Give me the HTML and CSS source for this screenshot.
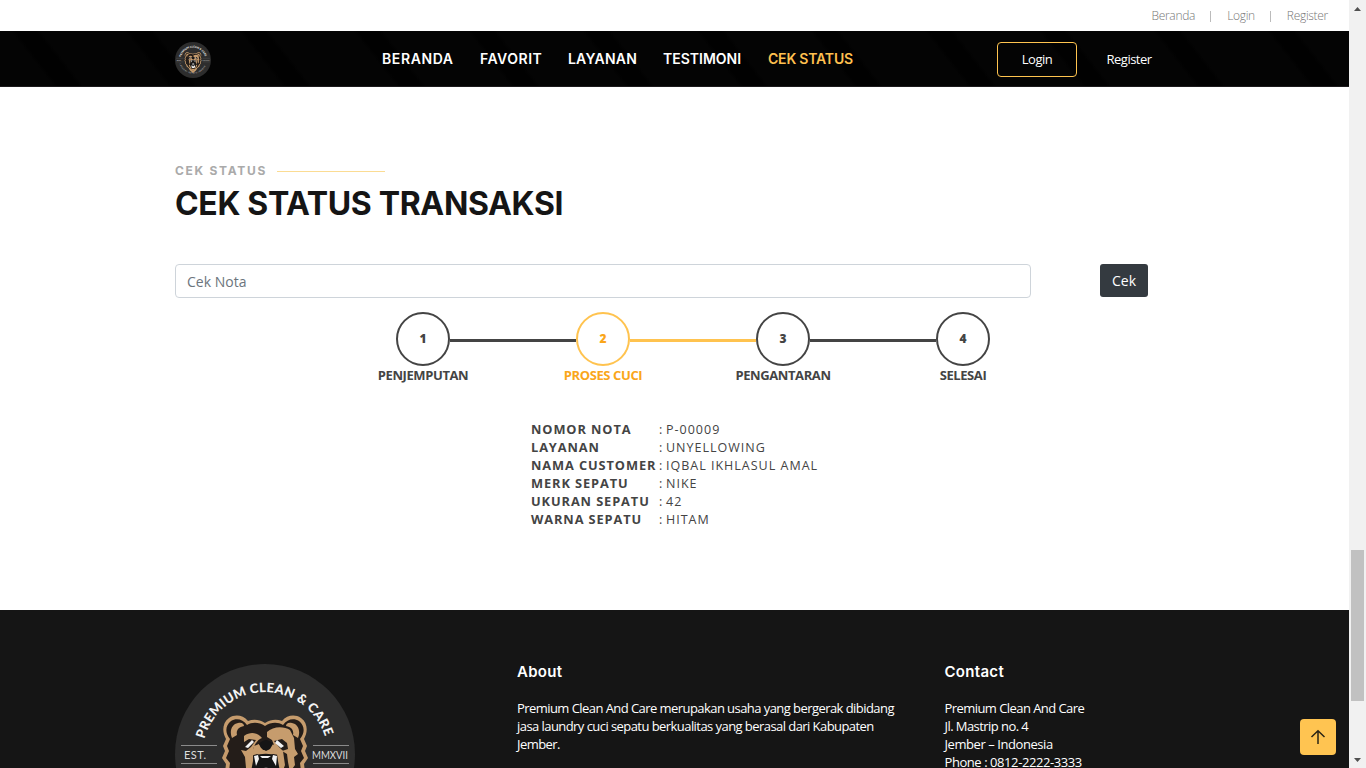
FILE: index.html
```html
<!DOCTYPE html>
<html lang="id">
<head>
<meta charset="utf-8">
<title>Premium Clean And Care</title>
<link rel="stylesheet" href="styles.css">
</head>
<body>
<svg class="defs" aria-hidden="true">
  <defs>
    <path id="arc-top" d="M29.5 75A62.5 62.5 0 0 1 150.500 75"/>
    <path id="arc-bottom" d="M22 108A71 71 0 0 0 158 108"/>
    <symbol id="logo" viewBox="0 0 180 180">
      <circle cx="90" cy="90" r="90" fill="#2d2d2d"/>
      <text class="logo-arc"><textPath href="#arc-top" textLength="162" lengthAdjust="spacing">PREMIUM CLEAN &amp; CARE</textPath></text>
      <text class="logo-low"><textPath href="#arc-bottom" textLength="168">LAUNDRY SEPATU JEMBER</textPath></text>
      <g stroke="#8b8b8b" stroke-width="1"><path d="M6 81.5h36M6 99.5h36M138 81.5h36M138 99.5h36"/></g>
      <text x="9" y="94.500" class="logo-side" textLength="22">EST.</text>
      <text x="137" y="94.500" class="logo-side" textLength="36" lengthAdjust="spacingAndGlyphs">MMXVII</text>
      <path fill="#c69c6d" d="M90 59C84 55 78 55 73 57C68 51 60 50 54 54C47 59 47 68 51 75L48 82L50 87L47 94L51 100L50 108L56 114L58 122L68 130L75 143L90 155L105 143L112 130L122 122L124 114L130 108L129 100L133 94L130 87L132 82L129 75C133 68 133 59 126 54C120 50 112 51 107 57C102 55 96 55 90 59Z"/>
      <path fill="#241d19" d="M90 62C84 58 77 58 72 61C68 55 61 54 56 57C50 62 50 69 55 75L52 82L54 87L51 94L55 99L54 107L60 113L66 124L90 142L114 124L120 113L126 107L125 99L129 94L126 87L128 82L125 75C130 69 130 62 124 57C119 54 112 55 108 61C103 58 96 58 90 62Z"/>
      <path fill="#c69c6d" d="M57 74C54 67 57 60 63 59C67 58 69 60 69 62C63 63 61 67 62 71ZM123 74C126 67 123 60 117 59C113 58 111 60 111 62C117 63 119 67 118 71Z"/>
      <path fill="#c69c6d" d="M69 72C76 67 83 69 87 74C83 75 79 81 78 86L78 104L75 112L71 104L70 93L66 86L71 87L76 83L81 76L74 75L69 78Z"/>
      <path fill="#c69c6d" d="M92 68C98 62 109 62 115 66L119 74L120 85L123 90L119 93L120 101L115 108L113 98L112 90L107 87L113 85L112 79L107 75L99 77L104 83L108 87L110 101L106 112L103 104L102 88L97 76L92 73Z"/>
      <path fill="#c69c6d" d="M79 82L84 80L88 86H93L97 80L102 82L104 91L98 90L94 92L90 90L86 92L82 90L76 92Z"/>
      <path fill="#c69c6d" d="M75 112L82 134L99 134L106 112L111 118L101 135L90 143L79 135L69 118Z"/>
      <path fill="#151515" d="M84 80Q91 72 98 80L95 85L91 87L86 84Z"/>
      <path fill="#151515" d="M79 91.500Q91 88 102 91.500L106 113L98 131H83L75 113Z"/>
      <g fill="#f2f2f2">
        <path d="M70 83L77 76L79 78L73 84ZM102 76L109 82L106 84L100 79Z"/>
        <path d="M79 92L83 91L84 95L81 102ZM98 91L102 92L101 102L97 95ZM85 92L96 92L93 94H87ZM82 126L84 114L88 121H95L99 114L101 126L95 130H87Z"/>
      </g>
      <path fill="#888" d="M86 106Q91 101 96 106V116H86Z"/>
    </symbol>
  </defs>
</svg>
<div class="window">
  <div class="page">
    <div class="topbar"><a>Beranda</a><i></i><a>Login</a><i></i><a>Register</a></div>
    <header class="header">
      <svg class="brand" viewBox="0 0 180 180"><use href="#logo"/></svg>
      <nav class="nav">
        <a class="n1">BERANDA</a><a class="n2">FAVORIT</a><a class="n3">LAYANAN</a><a class="n4">TESTIMONI</a><a class="n5 active">CEK STATUS</a>
      </nav>
      <div class="auth"><a class="login">Login</a><a class="register">Register</a></div>
    </header>
    <main class="main">
      <div class="eyebrow"><span>CEK STATUS</span></div>
      <h1>CEK STATUS TRANSAKSI</h1>
      <form class="search"><input type="text" placeholder="Cek Nota"><button type="button">Cek</button></form>
      <div class="steps">
        <div class="step"><b>1</b><span>PENJEMPUTAN</span></div>
        <div class="step current"><b>2</b><span>PROSES CUCI</span></div>
        <div class="step"><b>3</b><span>PENGANTARAN</span></div>
        <div class="step"><b>4</b><span>SELESAI</span></div>
      </div>
      <dl class="details">
        <dt>NOMOR NOTA</dt><dd>:</dd><dd>P-00009</dd>
        <dt>LAYANAN</dt><dd>:</dd><dd>UNYELLOWING</dd>
        <dt>NAMA CUSTOMER</dt><dd>:</dd><dd>IQBAL IKHLASUL AMAL</dd>
        <dt>MERK SEPATU</dt><dd>:</dd><dd>NIKE</dd>
        <dt>UKURAN SEPATU</dt><dd>:</dd><dd>42</dd>
        <dt>WARNA SEPATU</dt><dd>:</dd><dd>HITAM</dd>
      </dl>
    </main>
    <footer class="footer">
      <svg class="seal" viewBox="0 0 180 180"><use href="#logo"/></svg>
      <section class="about"><h2>About</h2><p>Premium Clean And Care merupakan usaha yang bergerak dibidang<br>jasa laundry cuci sepatu berkualitas yang berasal dari Kabupaten<br>Jember.</p></section>
      <section class="contact"><h2>Contact</h2><p>Premium Clean And Care<br>Jl. Mastrip no. 4<br><span class="wide">Jember – Indonesia<br>Phone : 0812-2222-3333</span></p></section>
    </footer>
    <a class="to-top"><svg width="16" height="16" viewBox="0 0 16 16" fill="none" stroke="#2b2415" stroke-width="1.500"><path d="M8 15V2M1.500 8L8 1.800L14.500 8"/></svg></a>
  </div>
  <div class="scrollbar">
    <svg width="17" height="17" viewBox="0 0 17 17"><path d="M5 11L8.500 7L12 11Z" fill="#505050"/></svg>
    <div class="thumb"></div>
    <svg width="17" height="17" viewBox="0 0 17 17"><path d="M5 7L8.500 11L12 7Z" fill="#505050"/></svg>
  </div>
</div>
</body>
</html>
```
FILE: styles.css
```css
* { box-sizing: border-box; }
body { margin: 0; overflow: hidden; background: #fff; font-family: "Open Sans", "Noto Sans", sans-serif; font-size: 13px; color: #444; }
.defs { position: absolute; width: 0; height: 0; }
.window { display: flex; height: 768px; overflow: hidden; }
.page { position: relative; width: 1349px; height: 768px; overflow: hidden; }
.topbar { display: flex; align-items: center; justify-content: flex-end; height: 31px; padding: 0 21px 0 0; font-size: 12px; font-weight: 300; color: #777; letter-spacing: -.3px; }
.topbar i { width: 1px; height: 11px; margin: 2px 16px 0 15px; background: #bbb; }
.header { display: flex; align-items: center; height: 56px; padding: 0 0 0 175px; border-bottom: 1px solid #1c1a1c;
  background: repeating-linear-gradient(52deg, #040404 0 42px, #010101 46px 62px, #040404 66px 90px); }
.brand { width: 36px; height: 36px; margin-top: 2px; }
.nav { display: flex; gap: 27px; margin-left: 171px; font-family: "Inter", sans-serif; font-weight: 600; font-size: 14px; line-height: 20px; color: #fff; white-space: nowrap; }
.nav a { display: block; }
.n1 { width: 71px; letter-spacing: .6px; }
.n2 { width: 61px; letter-spacing: .5px; }
.n3 { width: 68px; letter-spacing: .2px; }
.n4 { width: 78px; }
.n5 { width: 86px; letter-spacing: -.2px; }
.nav .active { color: #ffc04f; }
.auth { display: flex; align-items: center; margin-left: 143px; color: #fff; letter-spacing: -.5px; font-size: 13px; }
.login { width: 80px; height: 35px; border: 1px solid #ffc44f; border-radius: 4px; text-align: center; line-height: 32px; margin-top: 1px; }
.register { margin: 0 0 0 29.500px; }
.main { height: 523px; padding: 75px 0 0 175px; }
.eyebrow { display: flex; align-items: center; gap: 10px; height: 18px; color: #aaa; font: 700 12px/18px "Inter", sans-serif; letter-spacing: 1.700px; white-space: nowrap; }
.eyebrow span { width: 92px; }
.eyebrow::after { content: ""; width: 108px; height: 1px; margin-top: 1px; background: #fbdc93; }
h1 { margin: 4px 0 0; font: 700 32px/40px "Inter", sans-serif; letter-spacing: -.35px; color: #151515; white-space: nowrap; }
.search { display: flex; align-items: flex-start; gap: 69px; margin-top: 40px; }
.search input { width: 856px; height: 34px; padding: 1px 11px 0; border: 1px solid #ced4da; border-radius: 4px; font: 14px "Open Sans", sans-serif; }
.search input::placeholder { color: #6c757d; opacity: 1; }
.search button { width: 48px; height: 33px; padding: 0; border: 0; border-radius: 3px; background: #343a40; color: #fff; font: 14px "Open Sans", sans-serif; }
.steps { display: grid; grid-template-columns: repeat(4, 180px); margin: 14px 0 0 158px; height: 74px; font-weight: 700; }
.step { display: grid; grid-template-columns: 1fr 54px 1fr; grid-template-rows: 54px 20px; align-items: center; text-align: center; font-size: 12px; }
.step b { grid-column: 2; grid-row: 1; height: 54px; border: 2px solid #444; border-radius: 50%; line-height: 49px; }
.step::before, .step::after { content: ""; grid-row: 1; height: 3px; margin-top: 3px; background: #444; }
.step::before { grid-column: 1; }
.step::after { grid-column: 3; }
.step:first-child::before, .step:last-child::after { background: transparent; }
.step span { grid-column: 1 / -1; line-height: 18px; margin-top: -3px; font-size: 13px; font-weight: 700; letter-spacing: -.4px; }
.current { color: #faa61a; }
.current b { border-color: #ffc34f; }
.current::after, .current + .step::before { background: #ffc34f; }
.details { display: grid; grid-template-columns: 128px 7px auto; grid-auto-rows: 18px; margin: 35px 0 0 356px; line-height: 18px; font-size: 12.500px; letter-spacing: 1px; white-space: nowrap; }
.details dt { font-weight: 700; font-size: 12.800px; line-height: 16px; letter-spacing: .9px; }
.details dd { margin: 0; }
.footer { display: flex; height: 158px; overflow: hidden; padding: 54px 0 0 175px; background: #151515; color: #fff; }
.seal { flex: none; width: 180px; height: 180px; }
.footer section { flex: none; white-space: nowrap; }
.about { width: 427.500px; margin-left: 162px; }
.footer h2 { margin: -2px 0 0; font: 600 15px/20px "Inter", sans-serif; letter-spacing: .3px; }
.footer p { margin: 17px 0 0; font-size: 13px; line-height: 18px; letter-spacing: -.56px; }
.contact .wide { letter-spacing: -.43px; }
.logo-arc { font: 900 13px Lato, sans-serif; fill: #f4f4f4; }
.logo-low { font: 700 10px Lato, sans-serif; fill: #aaa; }
.logo-side { font: 400 11px Lato, sans-serif; fill: #ddd; }
.to-top { position: absolute; right: 13px; bottom: 13px; display: flex; align-items: center; justify-content: center; width: 36px; height: 36px; border-radius: 4px; background: #ffc451; }
.scrollbar { display: flex; flex-direction: column; align-items: center; width: 17px; height: 768px; background: #f1f1f1; }
.thumb { width: 13px; height: 151px; margin-top: 533px; margin-bottom: 50px; background: #c1c1c1; }
```
